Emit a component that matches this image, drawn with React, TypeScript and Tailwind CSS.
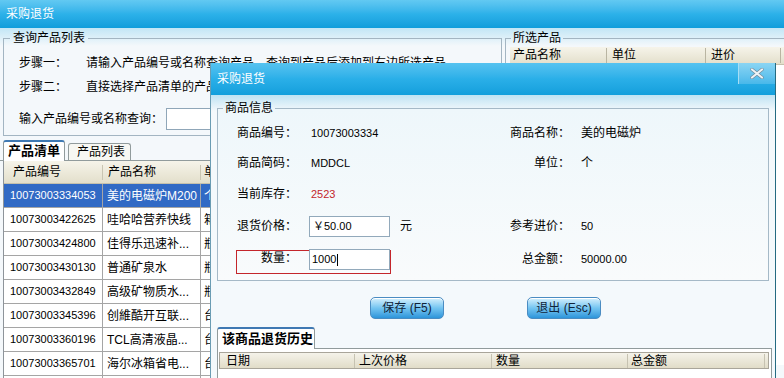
import React from 'react';

const products = [
  { code: '10073003334053', name: '美的电磁炉M200', unit: '个' },
  { code: '10073003422625', name: '哇哈哈营养快线', unit: '箱' },
  { code: '10073003424800', name: '佳得乐迅速补...', unit: '瓶' },
  { code: '10073003430130', name: '普通矿泉水', unit: '瓶' },
  { code: '10073003432849', name: '高级矿物质水...', unit: '瓶' },
  { code: '10073003345396', name: '创維酷开互联...', unit: '台' },
  { code: '10073003360196', name: 'TCL高清液晶...', unit: '台' },
  { code: '10073003365701', name: '海尔冰箱省电...', unit: '台' },
  { code: '10073003370194', name: '小天鹅洗衣机', unit: '台' },
];

const GlossButton = ({ label }: { label: string }) => (
  <button className="h-[22px] w-[74px] rounded-[5px] border border-[#4a8cc2] bg-linear-to-b from-[#d4f0fd] via-[#74c5f1] to-[#2b95da] text-[12px] leading-[20px] text-[#10243a] shadow-[inset_0_1px_0_#ffffff]">
    {label}
  </button>
);

const InfoRow = ({
  h,
  label,
  value,
  rLabel,
  rValue,
}: {
  h: string;
  label?: string;
  value?: React.ReactNode;
  rLabel?: string;
  rValue?: React.ReactNode;
}) => (
  <div className={`flex items-center pl-[19px] ${h}`}>
    <div className="w-[60px] text-right">{label}</div>
    <div className="w-[203px] pl-[14px]">{value}</div>
    <div className="w-[70px] text-right">{rLabel}</div>
    <div className="pl-[11px]">{rValue}</div>
  </div>
);

export default function App() {
  return (
    <div className="relative h-[378px] w-[784px] overflow-hidden bg-[#f6f9fb] text-[12px] text-black font-['Liberation_Sans','Noto_Sans_CJK_SC',sans-serif]">
      {/* window title */}
      <div className="flex h-[28px] items-center bg-linear-to-b from-[#62c9f2] via-[#2cb1e9] to-[#109ddb] pl-[6px] text-white leading-[14px]">
        采购退货
      </div>

      <div className="flex bg-[linear-gradient(#c2e6f6,#f4f8fb_18px)] pt-[2px]">
        {/* left side */}
        <div className="w-[503px] shrink-0">
          <fieldset className="ml-[3px] h-[106px] w-[499px] border border-[#a3b5c2]">
            <legend className="ml-[6px] px-[3px] leading-[16px]">查询产品列表</legend>
            <div className="pl-[15px] pt-[5px]">
              <div className="flex h-[24px] items-center">
                <span className="w-[67px]">步骤一：</span>
                <span className="whitespace-nowrap">请输入产品编号或名称查询产品，查询到产品后添加到右边所选产品</span>
              </div>
              <div className="flex h-[24px] items-center">
                <span className="w-[67px]">步骤二：</span>
                <span className="whitespace-nowrap">直接选择产品清单的产品，双击添加到右边所选产品</span>
              </div>
              <div className="mt-[8px] flex h-[24px] items-center">
                <span>输入产品编号或名称查询：</span>
                <div className="ml-[3px] h-[22px] w-[240px] border border-[#8fa6b8] bg-white" />
              </div>
            </div>
          </fieldset>

          {/* tabs */}
          <div className="mt-[5px] flex h-[20px] items-end border-b border-[#919b9c] pl-[3px]">
            <div className="-mb-px h-[21px] w-[62px] rounded-t-[3px] border border-b-0 border-t-2 border-[#919b9c] border-t-[#3f79b3] bg-white pl-[4px] text-[13px] font-bold leading-[18px]">
              产品清单
            </div>
            <div className="ml-[3px] h-[17px] w-[63px] rounded-t-[3px] border border-b-0 border-[#919b9c] bg-[#f7f7f2] pl-[8px] leading-[16px]">
              产品列表
            </div>
          </div>

          {/* product table */}
          <div className="ml-[3px] border-l border-[#8d949a] bg-white">
            <div className="flex h-[23px] items-center border-b border-[#c5c1ad] bg-linear-to-b from-[#f6f4ea] to-[#e3dfcb]">
              <div className="w-[99px] border-r border-[#c9c5b2] pl-[9px] leading-[15px]">产品编号</div>
              <div className="w-[98px] border-r border-[#c9c5b2] pl-[5px] leading-[15px]">产品名称</div>
              <div className="w-[100px] pl-[3px] leading-[15px]">单位</div>
            </div>
            {products.map((p, i) => (
              <div
                key={p.code}
                className={`flex h-[24px] items-center border-b border-[#a5a5a5] ${
                  i === 0 ? 'bg-[#316ac5] text-white' : ''
                }`}
              >
                <div className="flex h-full w-[99px] items-center border-r border-[#a5a5a5] pl-[6px] text-[11px]">{p.code}</div>
                <div className="flex h-full w-[98px] items-center border-r border-[#a5a5a5] pl-[4px] whitespace-nowrap">{p.name}</div>
                <div className="flex h-full w-[100px] items-center pl-[3px]">{p.unit}</div>
              </div>
            ))}
          </div>
        </div>

        {/* right side */}
        <fieldset className="ml-[2px] h-[360px] w-[300px] shrink-0 border border-[#a3b5c2]">
          <legend className="ml-[5px] px-[2px] leading-[16px]">所选产品</legend>
          <div className="ml-[4px] mt-[1px] flex h-[18px] items-center whitespace-nowrap border-b border-[#c5c1ad] bg-linear-to-b from-[#f6f4ea] to-[#e3dfcb]">
            <div className="w-[97px] shrink-0 border-r border-[#b9b5a2] pl-[3px] leading-[15px]">产品名称</div>
            <div className="w-[99px] shrink-0 border-r border-[#b9b5a2] pl-[5px] leading-[15px]">单位</div>
            <div className="w-[75px] shrink-0 border-r border-[#b9b5a2] pl-[5px] leading-[15px]">进价</div>
            <div className="shrink-0 pl-[3px] leading-[15px]">数量</div>
          </div>
          <div className="ml-[4px] h-[300px] bg-white" />
        </fieldset>
      </div>

      {/* dialog */}
      <div className="absolute left-[210px] top-[63px] h-[330px] w-[566px] border-x border-l-[#6a9cb3] border-r-[#256b82] bg-[#f6fafc]">
        <div className="flex h-[32px] bg-linear-to-b from-[#55c3f0] via-[#2aafe8] to-[#129fdc]">
          <div className="pl-[6px] pt-[9px] leading-[14px] text-white">采购退货</div>
          <div className="ml-auto flex h-[21px] w-[37px] items-center justify-center border-l border-[#a6def5] bg-linear-to-b from-[#8ad5f3] to-[#48b8ea]">
            <svg width="14" height="11" viewBox="0 0 14 11">
              <path d="M2 1.5 L12 9.5 M12 1.5 L2 9.5" stroke="#6f8796" strokeWidth="3.4" strokeLinecap="round" />
              <path d="M2 1.5 L12 9.5 M12 1.5 L2 9.5" stroke="#eef3f6" strokeWidth="2.2" strokeLinecap="round" />
            </svg>
          </div>
        </div>

        <div className="bg-[linear-gradient(#bfe3f3,#f4f9fc_16px)] pt-[5px]">
          <fieldset className="ml-[6px] w-[552px] border border-[#a5b9c7] bg-[linear-gradient(#eef7fb,#f9fbfc)] pb-[4px]">
            <legend className="ml-[5px] px-[2px] leading-[16px]">商品信息</legend>
            <div className="pt-[2px]">
              <InfoRow
                h="h-[30px]"
                label="商品编号："
                value={<span className="text-[11px]">10073003334</span>}
                rLabel="商品名称："
                rValue="美的电磁炉"
              />
              <InfoRow
                h="h-[30px]"
                label="商品简码："
                value={<span className="text-[11px]">MDDCL</span>}
                rLabel="单位："
                rValue="个"
              />
              <InfoRow
                h="h-[32px]"
                label="当前库存："
                value={<span className="text-[11px] text-[#c3252c]">2523</span>}
              />
              <div className="flex h-[32px] items-center pl-[19px]">
                <div className="w-[60px] text-right">退货价格：</div>
                <div className="ml-[12px] flex h-[21px] w-[81px] items-center border border-[#92a9bb] bg-white pl-[3px] text-[11px]">
                  ￥50.00
                </div>
                <div className="ml-[10px] w-[100px]">元</div>
                <div className="w-[70px] text-right">参考进价：</div>
                <div className="pl-[11px] text-[11px]">50</div>
              </div>
              <div className="flex h-[34px] items-start pl-[18px]">
                <div className="mt-[8px] flex h-[24px] w-[155px] items-start border border-[#c4262b]">
                  <div className="mt-[1px] w-[60px] text-right leading-[12px]">数量：</div>
                  <div className="-mt-[2px] ml-[12px] flex h-[21px] w-[81px] items-center border border-[#92a9bb] bg-white pl-[2px] text-[11px]">
                    1000<span className="ml-px h-[12px] w-px bg-black" />
                  </div>
                </div>
                <div className="ml-[109px] w-[70px] pt-[9px] text-right leading-[16px]">总金额：</div>
                <div className="pl-[11px] pt-[9px] text-[11px] leading-[16px]">50000.00</div>
              </div>
            </div>
          </fieldset>

          <div className="mt-[16px] flex gap-[83px] pl-[159px]">
            <GlossButton label="保存 (F5)" />
            <GlossButton label="退出 (Esc)" />
          </div>

          {/* history */}
          <div className="ml-[6px] mt-[9px] w-[555px]">
            <div className="flex h-[21px] items-end border-b border-[#919b9c]">
              <div className="-mb-px h-[22px] w-[98px] rounded-t-[3px] border border-b-0 border-t-2 border-[#919b9c] border-t-[#3f79b3] bg-white pl-[4px] text-[13px] font-bold leading-[19px]">
                该商品退货历史
              </div>
            </div>
            <div className="h-[60px] border-x border-[#919b9c] bg-white pt-[3px]">
              <div className="ml-[1px] flex h-[17px] w-[550px] items-center border border-[#a9a59a] bg-linear-to-b from-[#f5f3ea] to-[#e1dcc8]">
                <div className="w-[135px] border-r border-[#c6c2b1] pl-[6px] leading-[14px]">日期</div>
                <div className="w-[137px] border-r border-[#c6c2b1] pl-[4px] leading-[14px]">上次价格</div>
                <div className="w-[136px] border-r border-[#c6c2b1] pl-[4px] leading-[14px]">数量</div>
                <div className="w-[137px] border-r border-[#c6c2b1] pl-[3px] leading-[14px]">总金额</div>
              </div>
            </div>
          </div>
        </div>
      </div>
    </div>
  );
}
